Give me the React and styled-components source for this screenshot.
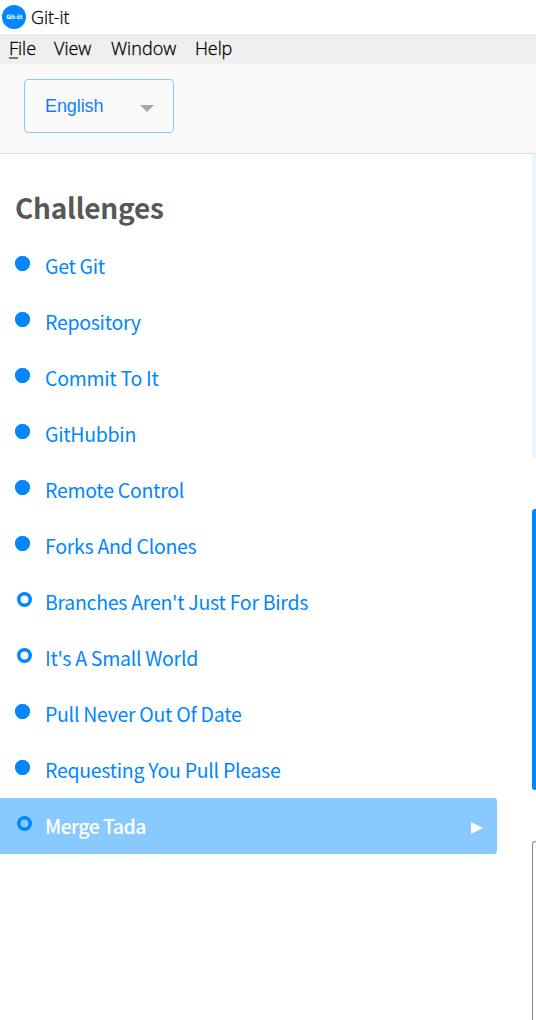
import React from "react";
import styled, { createGlobalStyle } from "styled-components";

const GlobalStyle = createGlobalStyle`
  * { box-sizing: border-box; }
  body { margin: 0; background: #fff; overflow: hidden; }
`;

const Window = styled.div`
  display: flex;
  flex-direction: column;
  width: 536px;
  height: 1020px;
  overflow: hidden;
  background: #fff;
  font-family: "Noto Sans CJK SC", "Noto Sans", sans-serif;
`;

const TitleBar = styled.header`
  display: flex;
  align-items: center;
  gap: 5px;
  height: 34px;
  padding-left: 2px;
  font: 300 18px/34px "Open Sans", sans-serif;
  color: #000;
`;

const AppLogo = styled.span`
  display: flex;
  align-items: center;
  justify-content: center;
  width: 24px;
  height: 24px;
  border-radius: 50%;
  background: #0087ff;
  color: #fff;
  font: bold 6px/24px "DejaVu Sans Mono", monospace;
  letter-spacing: -1px;
`;

const AppName = styled.span`
  letter-spacing: -0.1px;
  -webkit-text-stroke: 0.3px #000;
`;

const MenuBar = styled.nav`
  display: flex;
  gap: 18px;
  height: 30px;
  padding-left: 9px;
  background: #efefef;
  font: 300 18px/28px "Open Sans", sans-serif;
  color: #000;
  -webkit-text-stroke: 0.3px #000;
`;

const MenuItem = styled.span`
  width: ${(p) => p.$width}px;
  white-space: nowrap;
  letter-spacing: ${(p) => p.$spacing}px;
`;

const AccessKey = styled.span`
  display: inline-block;
  height: 25px;
  line-height: 28px;
  vertical-align: top;
  border-bottom: 2px solid #777;
`;

const Toolbar = styled.div`
  height: 90px;
  padding: 15px 24px;
  background: #fafafa;
  border-bottom: 1px solid #dcdcdc;
`;

const LanguageSelect = styled.div`
  display: flex;
  align-items: center;
  justify-content: space-between;
  width: 150px;
  height: 54px;
  padding: 0 19px 0 20px;
  border: 1px solid #88caff;
  border-radius: 4px;
  color: #0f7fff;
  font: 18px/52px "Liberation Sans", sans-serif;
  letter-spacing: -0.1px;
`;

const Caret = styled.span`
  margin-top: 4px;
  border: 7px solid transparent;
  border-top-color: #a6a6a6;
  border-bottom: 0;
`;

const Body = styled.main`
  display: flex;
  justify-content: space-between;
  flex: 1;
`;

const Sidebar = styled.aside`
  width: 497px;
`;

const Heading = styled.h1`
  height: 84px;
  margin: 0;
  padding: 31px 0 0 15px;
  color: #555957;
  font-size: 28px;
  font-weight: 700;
  line-height: 44px;
  letter-spacing: -0.25px;
`;

const ChallengeRow = styled.div`
  display: flex;
  align-items: center;
  height: 56px;
  padding: 0 14px 0 15px;
  border-radius: 0 3px 3px 0;
  background: ${(p) => (p.$active ? "#88caff" : "transparent")};
  color: ${(p) => (p.$active ? "#fff" : "#0087ff")};
  font-size: 19.5px;
  font-weight: ${(p) => (p.$active ? 500 : 400)};
  line-height: 56px;
  letter-spacing: ${(p) => (p.$active ? -0.55 : -0.28)}px;
`;

const StatusDot = styled.span`
  width: 15px;
  height: 15px;
  margin: 0 ${(p) => (p.$open ? 13 : 15)}px 5px ${(p) => (p.$open ? 2 : 0)}px;
  border-radius: 50%;
  background: ${(p) => (p.$open ? "transparent" : "#0087ff")};
  box-shadow: inset 0 0 0 3.5px #0087ff;
`;

const ChallengeName = styled.span`
  flex: 1;
  white-space: nowrap;
`;

const ActiveArrow = styled.span`
  margin-top: 3px;
  border: 6px solid transparent;
  border-left: 12px solid #fff;
  border-right: 0;
`;

const ContentEdge = styled.section`
  display: flex;
  flex-direction: column;
  width: 4px;
`;

const InfoPanel = styled.div`
  height: 304px;
  margin-bottom: 51px;
  border-radius: 0 0 0 3px;
  background: #e7f4ff;
`;

const StepPanel = styled.div`
  height: 281px;
  margin-bottom: 51px;
  border-radius: 3px 0 0 3px;
  background: #0087ff;
`;

const OutlinePanel = styled.div`
  flex: 1;
  border: 1px solid #8a8a8a;
  border-right: 0;
  border-bottom: 0;
  border-radius: 3px 0 0 0;
`;

const menus = [
  { name: "View", width: 39, spacing: 0 },
  { name: "Window", width: 66, spacing: 0.05 },
  { name: "Help", width: 38, spacing: -0.1 },
];

const challenges = [
  { name: "Get Git" },
  { name: "Repository" },
  { name: "Commit To It" },
  { name: "GitHubbin" },
  { name: "Remote Control" },
  { name: "Forks And Clones" },
  { name: "Branches Aren't Just For Birds", open: true },
  { name: "It's A Small World", open: true },
  { name: "Pull Never Out Of Date" },
  { name: "Requesting You Pull Please" },
  { name: "Merge Tada", open: true, active: true },
];

export default function App() {
  return (
    <Window>
      <GlobalStyle />
      <TitleBar>
        <AppLogo>Git-it</AppLogo>
        <AppName>Git-it</AppName>
      </TitleBar>
      <MenuBar>
        <MenuItem $width={27} $spacing={0}>
          <AccessKey>F</AccessKey>ile
        </MenuItem>
        {menus.map((m) => (
          <MenuItem key={m.name} $width={m.width} $spacing={m.spacing}>
            {m.name}
          </MenuItem>
        ))}
      </MenuBar>
      <Toolbar>
        <LanguageSelect>
          English
          <Caret />
        </LanguageSelect>
      </Toolbar>
      <Body>
        <Sidebar>
          <Heading>Challenges</Heading>
          {challenges.map((c) => (
            <ChallengeRow key={c.name} $active={c.active}>
              <StatusDot $open={c.open} />
              <ChallengeName>{c.name}</ChallengeName>
              {c.active && <ActiveArrow />}
            </ChallengeRow>
          ))}
        </Sidebar>
        <ContentEdge>
          <InfoPanel />
          <StepPanel />
          <OutlinePanel />
        </ContentEdge>
      </Body>
    </Window>
  );
}
